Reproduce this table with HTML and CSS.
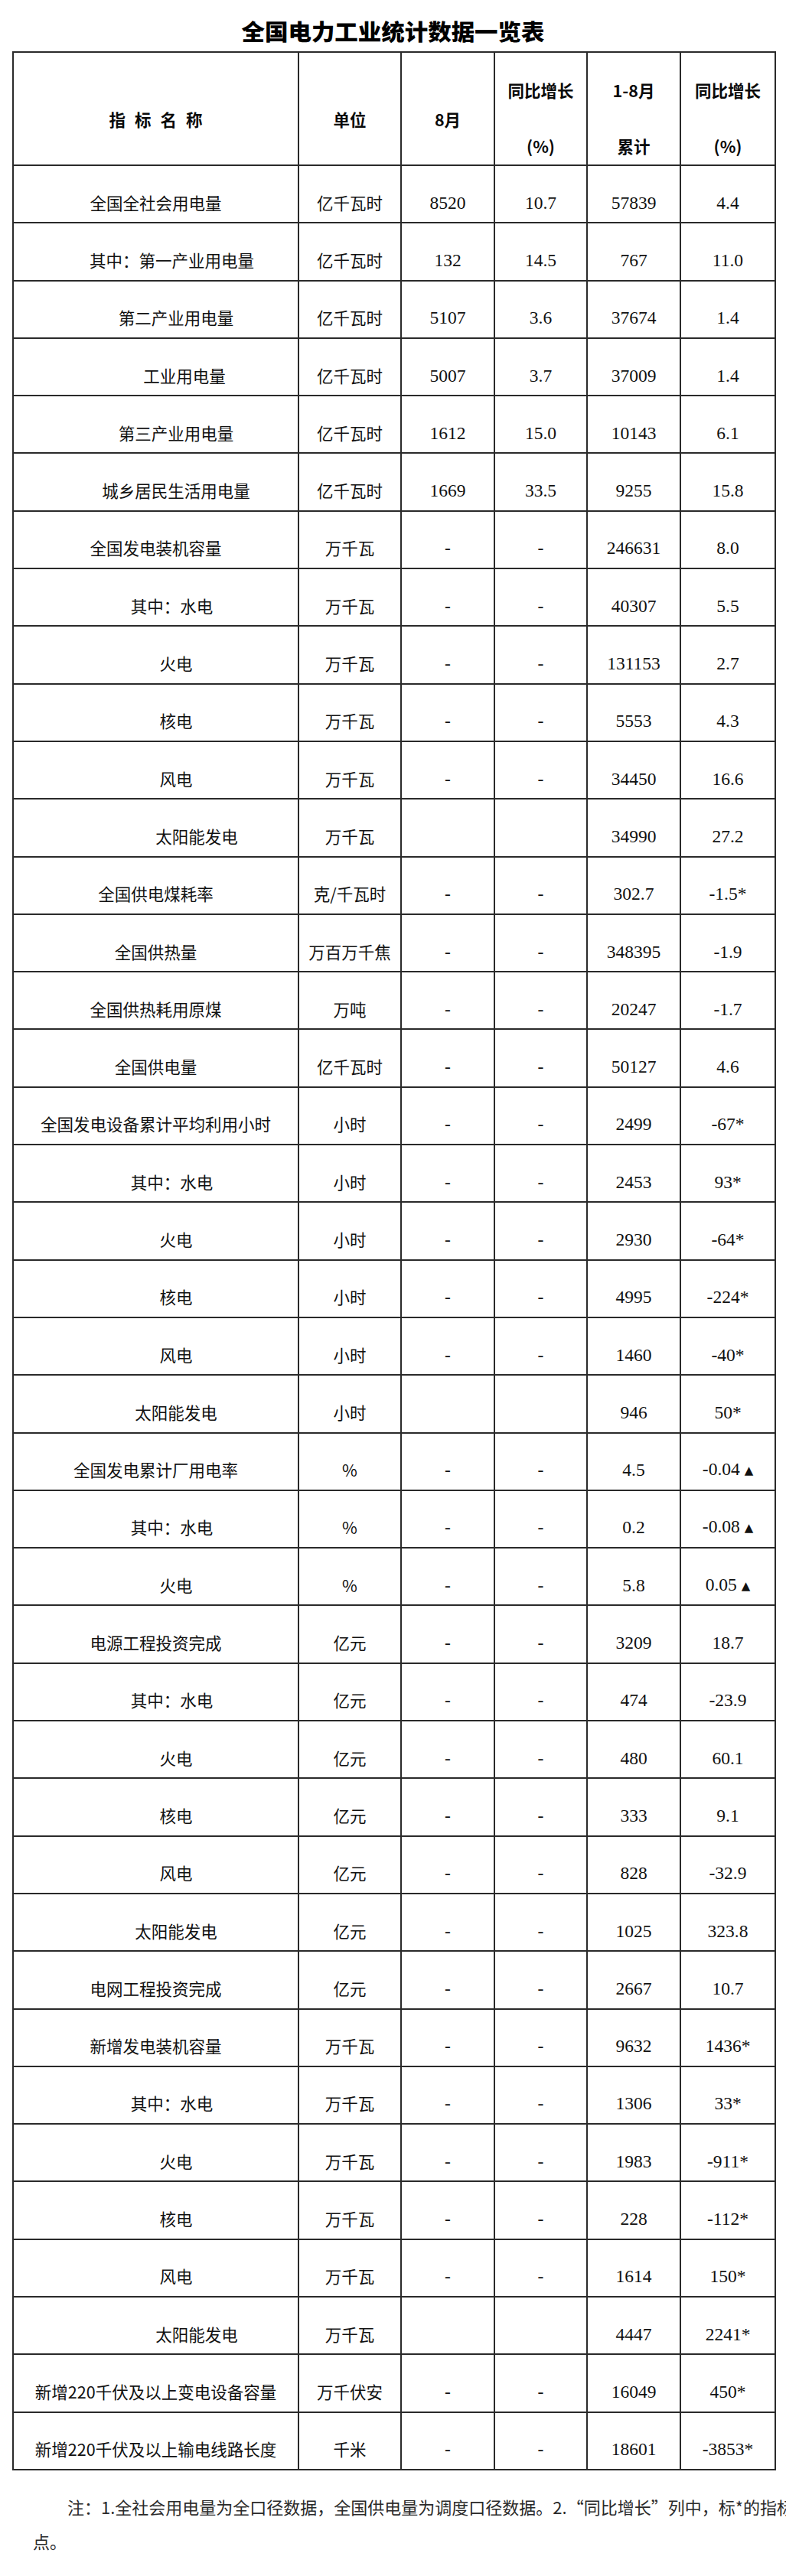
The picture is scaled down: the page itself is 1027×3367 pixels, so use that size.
FILE: index.html
```html
<!DOCTYPE html>
<html lang="zh-CN">
<head>
<meta charset="utf-8">
<title>全国电力工业统计数据一览表</title>
<link rel="stylesheet" href="styles.css">
</head>
<body>
<div class="page">
  <h1 class="title"><span class="title-text">全国电力工业统计数据一览表</span></h1>
  <table class="data">
    <colgroup>
      <col class="c-name"><col class="c-unit"><col class="c-m"><col class="c-g"><col class="c-t"><col class="c-g2">
    </colgroup>
    <thead>
      <tr>
        <th class="h1 hname">指标名称</th>
        <th class="h1">单位</th>
        <th class="h1">8月</th>
        <th class="h2"><span class="ln">同比增长</span><span class="ln ln2">(%)</span></th>
        <th class="h2"><span class="ln">1-8月</span><span class="ln ln2">累计</span></th>
        <th class="h2"><span class="ln">同比增长</span><span class="ln ln2">(%)</span></th>
      </tr>
    </thead>
    <tbody>
      <tr><td class="name">全国全社会用电量</td><td class="unit">亿千瓦时</td><td class="num">8520</td><td class="num">10.7</td><td class="num">57839</td><td class="num">4.4</td></tr>
      <tr><td class="name i1">其中：第一产业用电量</td><td class="unit">亿千瓦时</td><td class="num">132</td><td class="num">14.5</td><td class="num">767</td><td class="num">11.0</td></tr>
      <tr><td class="name i2">第二产业用电量</td><td class="unit">亿千瓦时</td><td class="num">5107</td><td class="num">3.6</td><td class="num">37674</td><td class="num">1.4</td></tr>
      <tr><td class="name i3">工业用电量</td><td class="unit">亿千瓦时</td><td class="num">5007</td><td class="num">3.7</td><td class="num">37009</td><td class="num">1.4</td></tr>
      <tr><td class="name i2">第三产业用电量</td><td class="unit">亿千瓦时</td><td class="num">1612</td><td class="num">15.0</td><td class="num">10143</td><td class="num">6.1</td></tr>
      <tr><td class="name i2">城乡居民生活用电量</td><td class="unit">亿千瓦时</td><td class="num">1669</td><td class="num">33.5</td><td class="num">9255</td><td class="num">15.8</td></tr>
      <tr><td class="name">全国发电装机容量</td><td class="unit">万千瓦</td><td class="num">-</td><td class="num">-</td><td class="num">246631</td><td class="num">8.0</td></tr>
      <tr><td class="name i1">其中：水电</td><td class="unit">万千瓦</td><td class="num">-</td><td class="num">-</td><td class="num">40307</td><td class="num">5.5</td></tr>
      <tr><td class="name i2">火电</td><td class="unit">万千瓦</td><td class="num">-</td><td class="num">-</td><td class="num">131153</td><td class="num">2.7</td></tr>
      <tr><td class="name i2">核电</td><td class="unit">万千瓦</td><td class="num">-</td><td class="num">-</td><td class="num">5553</td><td class="num">4.3</td></tr>
      <tr><td class="name i2">风电</td><td class="unit">万千瓦</td><td class="num">-</td><td class="num">-</td><td class="num">34450</td><td class="num">16.6</td></tr>
      <tr><td class="name i4">太阳能发电</td><td class="unit">万千瓦</td><td class="num"></td><td class="num"></td><td class="num">34990</td><td class="num">27.2</td></tr>
      <tr><td class="name">全国供电煤耗率</td><td class="unit">克/千瓦时</td><td class="num">-</td><td class="num">-</td><td class="num">302.7</td><td class="num">-1.5*</td></tr>
      <tr><td class="name">全国供热量</td><td class="unit">万百万千焦</td><td class="num">-</td><td class="num">-</td><td class="num">348395</td><td class="num">-1.9</td></tr>
      <tr><td class="name">全国供热耗用原煤</td><td class="unit">万吨</td><td class="num">-</td><td class="num">-</td><td class="num">20247</td><td class="num">-1.7</td></tr>
      <tr><td class="name">全国供电量</td><td class="unit">亿千瓦时</td><td class="num">-</td><td class="num">-</td><td class="num">50127</td><td class="num">4.6</td></tr>
      <tr><td class="name">全国发电设备累计平均利用小时</td><td class="unit">小时</td><td class="num">-</td><td class="num">-</td><td class="num">2499</td><td class="num">-67*</td></tr>
      <tr><td class="name i1">其中：水电</td><td class="unit">小时</td><td class="num">-</td><td class="num">-</td><td class="num">2453</td><td class="num">93*</td></tr>
      <tr><td class="name i2">火电</td><td class="unit">小时</td><td class="num">-</td><td class="num">-</td><td class="num">2930</td><td class="num">-64*</td></tr>
      <tr><td class="name i2">核电</td><td class="unit">小时</td><td class="num">-</td><td class="num">-</td><td class="num">4995</td><td class="num">-224*</td></tr>
      <tr><td class="name i2">风电</td><td class="unit">小时</td><td class="num">-</td><td class="num">-</td><td class="num">1460</td><td class="num">-40*</td></tr>
      <tr><td class="name i2">太阳能发电</td><td class="unit">小时</td><td class="num"></td><td class="num"></td><td class="num">946</td><td class="num">50*</td></tr>
      <tr><td class="name">全国发电累计厂用电率</td><td class="unit">%</td><td class="num">-</td><td class="num">-</td><td class="num">4.5</td><td class="num">-0.04 <span class="tri">▲</span></td></tr>
      <tr><td class="name i1">其中：水电</td><td class="unit">%</td><td class="num">-</td><td class="num">-</td><td class="num">0.2</td><td class="num">-0.08 <span class="tri">▲</span></td></tr>
      <tr><td class="name i2">火电</td><td class="unit">%</td><td class="num">-</td><td class="num">-</td><td class="num">5.8</td><td class="num">0.05 <span class="tri">▲</span></td></tr>
      <tr><td class="name">电源工程投资完成</td><td class="unit">亿元</td><td class="num">-</td><td class="num">-</td><td class="num">3209</td><td class="num">18.7</td></tr>
      <tr><td class="name i1">其中：水电</td><td class="unit">亿元</td><td class="num">-</td><td class="num">-</td><td class="num">474</td><td class="num">-23.9</td></tr>
      <tr><td class="name i2">火电</td><td class="unit">亿元</td><td class="num">-</td><td class="num">-</td><td class="num">480</td><td class="num">60.1</td></tr>
      <tr><td class="name i2">核电</td><td class="unit">亿元</td><td class="num">-</td><td class="num">-</td><td class="num">333</td><td class="num">9.1</td></tr>
      <tr><td class="name i2">风电</td><td class="unit">亿元</td><td class="num">-</td><td class="num">-</td><td class="num">828</td><td class="num">-32.9</td></tr>
      <tr><td class="name i2">太阳能发电</td><td class="unit">亿元</td><td class="num">-</td><td class="num">-</td><td class="num">1025</td><td class="num">323.8</td></tr>
      <tr><td class="name">电网工程投资完成</td><td class="unit">亿元</td><td class="num">-</td><td class="num">-</td><td class="num">2667</td><td class="num">10.7</td></tr>
      <tr><td class="name">新增发电装机容量</td><td class="unit">万千瓦</td><td class="num">-</td><td class="num">-</td><td class="num">9632</td><td class="num">1436*</td></tr>
      <tr><td class="name i1">其中：水电</td><td class="unit">万千瓦</td><td class="num">-</td><td class="num">-</td><td class="num">1306</td><td class="num">33*</td></tr>
      <tr><td class="name i2">火电</td><td class="unit">万千瓦</td><td class="num">-</td><td class="num">-</td><td class="num">1983</td><td class="num">-911*</td></tr>
      <tr><td class="name i2">核电</td><td class="unit">万千瓦</td><td class="num">-</td><td class="num">-</td><td class="num">228</td><td class="num">-112*</td></tr>
      <tr><td class="name i2">风电</td><td class="unit">万千瓦</td><td class="num">-</td><td class="num">-</td><td class="num">1614</td><td class="num">150*</td></tr>
      <tr><td class="name i4">太阳能发电</td><td class="unit">万千瓦</td><td class="num"></td><td class="num"></td><td class="num">4447</td><td class="num">2241*</td></tr>
      <tr><td class="name">新增220千伏及以上变电设备容量</td><td class="unit">万千伏安</td><td class="num">-</td><td class="num">-</td><td class="num">16049</td><td class="num">450*</td></tr>
      <tr><td class="name">新增220千伏及以上输电线路长度</td><td class="unit">千米</td><td class="num">-</td><td class="num">-</td><td class="num">18601</td><td class="num">-3853*</td></tr>
    </tbody>
  </table>
  <div class="note">
    <p class="note-line first">注：1.全社会用电量为全口径数据，全国供电量为调度口径数据。2.“同比增长”列中，标*的指标为绝对增加值，标▲的指标为增减百分</p>
    <p class="note-line">点。</p>
  </div>
</div>
</body>
</html>
```

FILE: styles.css
```css
html, body {
  margin: 0;
  padding: 0;
  background: #ffffff;
}

body {
  width: 1027px;
  overflow-x: hidden;
  font-family: "Noto Sans CJK SC", "Noto Sans", sans-serif;
  color: #111111;
}

.page {
  width: 1027px;
  overflow: hidden;
  padding-bottom: 20px;
}

.title {
  margin: 20px 0 7px 0;
  height: 40px;
  line-height: 40px;
  text-align: center;
  font-size: 29px;
  font-weight: 900;
  color: #000000;
}

.title-text {
  display: inline-block;
  letter-spacing: 0;
  transform: scaleX(1.05);
}

.data {
  margin-left: 16px;
  width: 996px;
  table-layout: fixed;
  border-collapse: collapse;
  border: 2px solid #000000;
}

.c-name { width: 373px; }
.c-unit { width: 134px; }
.c-m { width: 122px; }
.c-g { width: 121px; }
.c-t { width: 122px; }
.c-g2 { width: 124px; }

.data th,
.data td {
  border: 2px solid #2a2a2a;
  text-align: center;
  white-space: nowrap;
  padding: 0;
}

.data thead tr {
  height: 148px;
}

.data th {
  vertical-align: top;
  font-family: "Noto Sans CJK SC", sans-serif;
  font-weight: 700;
  font-size: 21.5px;
  line-height: 30px;
  color: #0a0a0a;
}

.data th.h1 {
  padding-top: 72px;
}

.data th.h2 {
  padding-top: 34px;
}

.data th.hname {
  letter-spacing: 12px;
  padding-left: 12px;
}

.ln {
  display: block;
}

.ln2 {
  margin-top: 43px;
}

.data tbody tr {
  height: 75.3px;
}

.data td {
  vertical-align: middle;
  padding-top: 22px;
  line-height: 30px;
}

.data td.name,
.data td.unit {
  font-family: "Noto Sans CJK SC", sans-serif;
  font-size: 21.5px;
  font-weight: 400;
}

.data td.name.i1 { padding-left: 42px; }
.data td.name.i2 { padding-left: 53px; }
.data td.name.i3 { padding-left: 75px; }
.data td.name.i4 { padding-left: 107px; }

.data td.num {
  font-family: "Liberation Serif", "DejaVu Serif", serif;
  font-size: 23.5px;
}

.tri {
  font-family: "DejaVu Sans", sans-serif;
  font-size: 15px;
  vertical-align: 1px;
}

.note {
  margin-top: 25px;
  padding-left: 43px;
  width: 984px;
  overflow: hidden;
  font-family: "Noto Sans CJK SC", sans-serif;
  font-size: 22px;
  line-height: 45px;
  color: #2a2a2a;
}

.note-line {
  margin: 0;
  white-space: nowrap;
}

.note-line.first {
  text-indent: 45px;
}
```
